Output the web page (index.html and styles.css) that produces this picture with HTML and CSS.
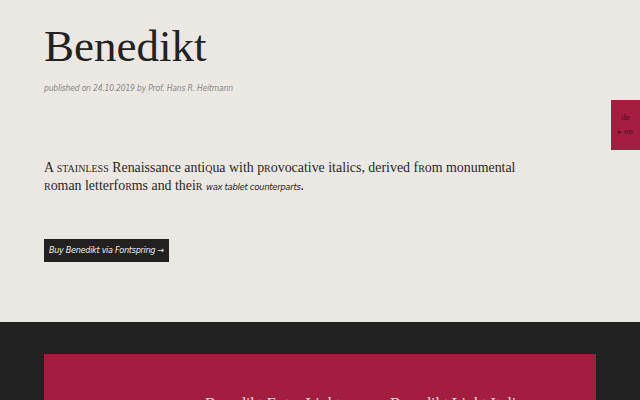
FILE: index.html
```html
<!DOCTYPE html>
<html lang="en">
<head>
<meta charset="utf-8">
<title>Benedikt</title>
<link rel="stylesheet" href="styles.css">
</head>
<body>
<header class="intro">
  <h1 class="title">Benedikt</h1>
  <p class="meta">published on 24.10.2019 by Prof. Hans R. Heitmann</p>
  <p class="lead">A <span class="sc">stainless</span> Renaissance anti<span class="sc">q</span>ua with p<span class="sc">r</span>ovocative italics, derived f<span class="sc">r</span>om monumental <span class="sc">r</span>oman letterfo<span class="sc">r</span>ms and thei<span class="sc">r</span> <em class="it">wax tablet counterparts</em>.</p>
  <a class="buy" href="#">Buy Benedikt via Fontspring →</a>
</header>
<nav class="lang">
  <span class="lang-item">de</span>
  <span class="lang-item active"><span class="tri">▸</span>en</span>
</nav>
<section class="dark">
  <div class="card">
    <span class="style-name">Benedikt Extra Light</span>
    <span class="style-name">Benedikt Light Italic</span>
  </div>
</section>
</body>
</html>
```

FILE: styles.css
```css
html, body {
  margin: 0;
  padding: 0;
}
body {
  background: #ebe8e3;
  color: #222;
  font-family: "Liberation Serif", serif;
  width: 640px;
  height: 400px;
  overflow: hidden;
  position: relative;
}
.intro {
  padding: 0 44px;
  height: 322px;
  display: flex;
  flex-direction: column;
  align-items: flex-start;
}
.title {
  margin: 21px 0 0 0;
  font-weight: normal;
  font-size: 45px;
  line-height: 50px;
  color: #222;
}
.meta {
  margin: 10px 0 0 0;
  font-family: "DejaVu Sans Condensed", "DejaVu Sans", sans-serif;
  font-style: italic;
  font-size: 8.5px;
  letter-spacing: -0.2px;
  line-height: 14px;
  color: #8a8784;
}
.lead {
  margin: 64px 0 0 0;
  width: 500px;
  font-size: 13.9px;
  line-height: 18px;
  color: #2a2725;
}
.sc {
  font-variant: small-caps;
}
.it {
  font-family: "DejaVu Sans Condensed", "DejaVu Sans", sans-serif;
  font-size: 9.5px;
  letter-spacing: -0.35px;
}
.buy {
  margin-top: 43px;
  background: #222120;
  color: #f0eeea;
  text-decoration: none;
  font-family: "DejaVu Sans Condensed", "DejaVu Sans", sans-serif;
  font-style: italic;
  font-size: 9px;
  letter-spacing: -0.3px;
  line-height: 23px;
  padding: 0 5px;
}
.lang {
  position: absolute;
  top: 100px;
  right: 0;
  width: 29px;
  height: 50px;
  background: #a51d40;
  display: flex;
  flex-direction: column;
  align-items: center;
  justify-content: center;
  gap: 3px;
  font-family: "Liberation Serif", serif;
  font-size: 9px;
  line-height: 11px;
  color: #4e0c1e;
}
.tri {
  font-size: 7px;
  margin-right: 2px;
}
.dark {
  background: #222222;
  height: 78px;
  padding: 32px 44px 0 44px;
  box-sizing: border-box;
}
.card {
  background: #a31d3e;
  height: 46px;
  display: flex;
  justify-content: flex-start;
  gap: 50px;
  padding: 41px 0 0 161px;
  box-sizing: border-box;
}
.style-name {
  font-family: "Liberation Serif", serif;
  font-size: 16px;
  line-height: 18px;
  color: #f3d9df;
}
```
